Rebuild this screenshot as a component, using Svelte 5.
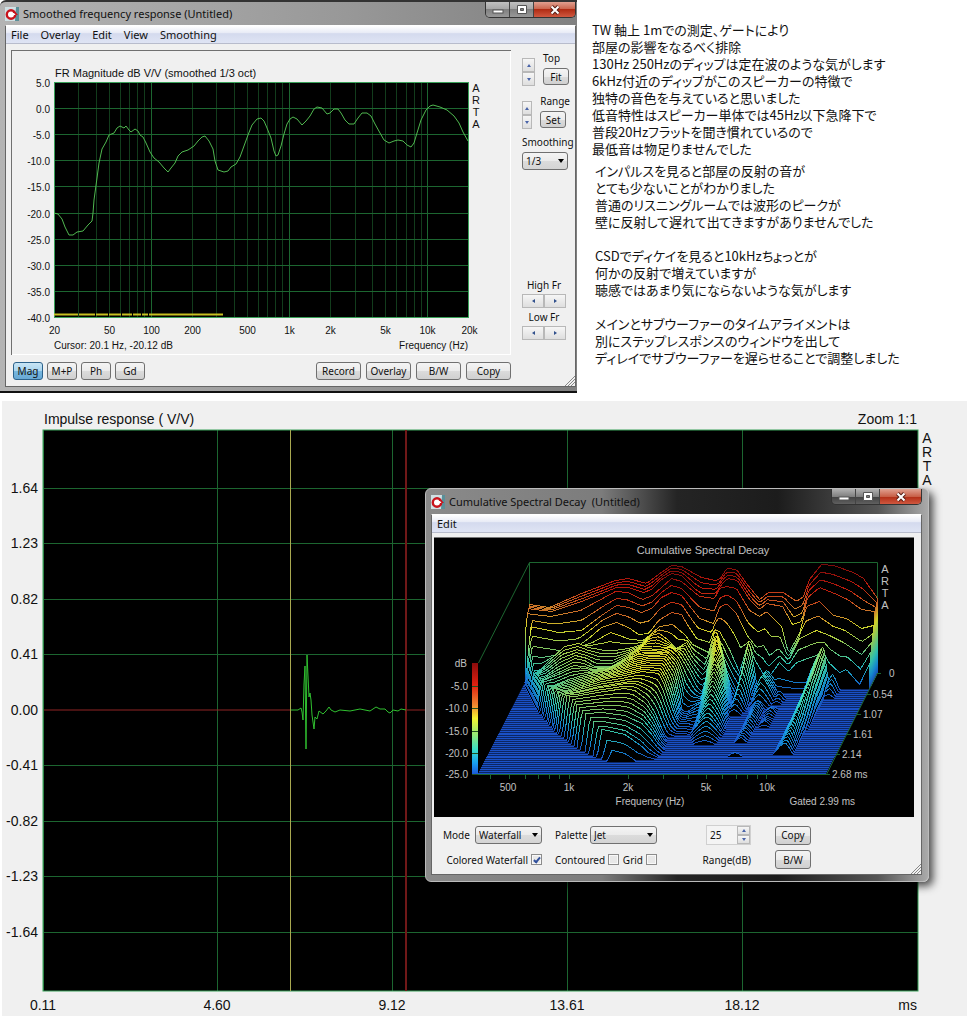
<script>
	const notes = [
		[
			'TW 軸上 1mでの測定、ゲートにより',
			'部屋の影響をなるべく排除',
			'130Hz 250Hzのディップは定在波のような気がします',
			'6kHz付近のディップがこのスピーカーの特徴で',
			'独特の音色を与えていると思いました',
			'低音特性はスピーカー単体では45Hz以下急降下で',
			'普段20Hzフラットを聞き慣れているので',
			'最低音は物足りませんでした'
		],
		[
			'インパルスを見ると部屋の反射の音が',
			'とても少ないことがわかりました',
			'普通のリスニングルームでは波形のピークが',
			'壁に反射して遅れて出てきますがありませんでした'
		],
		[
			'CSDでディケイを見ると10kHzちょっとが',
			'何かの反射で増えていますが',
			'聴感ではあまり気にならないような気がします'
		],
		[
			'メインとサブウーファーのタイムアライメントは',
			'別にステップレスポンスのウィンドウを出して',
			'ディレイでサブウーファーを遅らせることで調整しました'
		]
	];

	// frequency response
	const frX = (f) => Math.round(54 + (414.5 * Math.log10(f / 20)) / 3) + 0.5;
	const frY = (db) => Math.round(82 + ((5 - db) * 235) / 45) + 0.5;
	const frRows = [5, 0, -5, -10, -15, -20, -25, -30, -35, -40];
	const frCols = [];
	for (const dec of [10, 100, 1000, 10000]) {
		for (let n = 1; n < 10; n++) {
			const f = dec * n;
			if (f > 20 && f < 20000) frCols.push({f, major: n === 1});
		}
	}
	const frLabels = [[20, '20'], [50, '50'], [100, '100'], [200, '200'], [500, '500'], [1000, '1k'], [2000, '2k'], [5000, '5k'], [10000, '10k'], [20000, '20k']];
	const frCurve = '54,213 58,214 62,219 65,227 69,235 73,235 77,232 83,231 88,225 92,221 93,213 94,200 97,178 99,163 102,149 106,142 109,135 114,133 117,128 120,126 124,128 126,126 129,130 131,132 135,129 138,131 140,135 143,137 146,143 150,152 154,158 159,162 164,168 168,172 171,168 175,163 178,156 182,152 188,150 194,146 198,141 202,137 205,136 209,141 213,149 215,161 218,170 224,172 228,171 231,167 236,164 240,157 244,146 248,135 252,125 257,119 261,118 264,121 267,128 271,138 274,151 276,156 278,155 281,146 284,134 287,124 290,119 293,117 297,119 302,125 306,121 310,116 314,109 317,107 322,108 327,114 330,113 334,109 338,109 341,113 345,120 349,124 354,124 358,118 362,113 367,113 371,116 375,124 380,133 384,140 389,143 394,141 398,140 403,141 407,145 411,147 414,143 417,133 421,120 426,110 430,106 433,105 440,107 447,110 454,116 459,123 463,132 468,141';

	// impulse response
	const irRows = [[488, '1.64'], [543, '1.23'], [599, '0.82'], [654, '0.41'], [710, '0.00'], [765, '-0.41'], [821, '-0.82'], [876, '-1.23'], [932, '-1.64']];
	const irCols = [[43, '0.11'], [217, '4.60'], [392, '9.12'], [567, '13.61'], [742, '18.12']];
	const irCurve = '291,710 298,710 301,708 302,712 303,720 304,684 305,666 306,749 307,655 309,697 310,693 311,700 312,715 314,729 315,717 317,719 319,711 323,714 326,711 329,707 331,710 335,712 340,710 350,711 360,709 370,711 376,707 380,709 385,709 388,712 390,713 393,710 398,711 401,709 406,710';

	// cumulative spectral decay: [x, height] profiles for some of the slices
	const profiles = [
		[0, [[0, 69], [20, 66], [52, 80], [86, 93], [99, 95], [117, 90], [129, 99], [142, 108], [152, 107], [172, 96], [186, 93], [191, 95], [197, 105], [207, 104], [217, 90], [230, 74], [239, 81], [254, 81], [267, 72], [274, 77], [280, 94], [292, 109], [304, 108], [324, 101], [334, 95], [348, 75]]],
		[3, [[0, 71], [25, 68], [55, 78], [75, 86], [90, 92], [102, 92], [117, 87], [125, 90], [135, 100], [145, 106], [155, 104], [168, 91], [175, 86], [189, 86], [195, 95], [201, 101], [211, 99], [223, 80], [233, 70], [240, 76], [256, 73], [266, 55], [275, 58], [281, 82], [293, 92], [308, 86], [321, 80], [335, 70], [348, 68]]],
		[4, [[0, 68], [25, 65], [55, 71], [90, 90], [102, 89], [117, 82], [127, 86], [146, 103], [156, 100], [174, 85], [189, 83], [194, 93], [201, 95], [211, 93], [224, 71], [234, 65], [241, 70], [256, 55], [263, 28], [274, 48], [281, 75], [294, 80], [308, 66], [321, 63], [336, 53], [348, 56]]],
		[6, [[0, 60], [11, 58], [35, 53], [58, 55], [78, 70], [93, 80], [105, 78], [118, 73], [128, 77], [138, 88], [148, 93], [158, 90], [168, 77], [176, 67], [190, 62], [196, 78], [203, 82], [213, 72], [223, 51], [233, 38], [240, 40], [246, 30], [255, 37], [265, 25], [276, 47], [293, 55], [306, 50], [320, 43], [338, 31], [348, 43]]],
		[8, [[0, 44], [37, 38], [53, 40], [67, 50], [80, 61], [95, 66], [107, 61], [117, 54], [127, 55], [137, 68], [150, 76], [160, 74], [167, 62], [175, 50], [188, 46], [193, 59], [198, 57], [208, 39], [218, 16], [227, 47], [233, 29], [242, 14], [247, 11], [258, 26], [267, 17], [275, 26], [292, 32], [302, 36], [307, 26], [318, 16], [325, 19], [338, 4], [348, 25]]],
		[9, [[0, 36], [21, 33], [40, 36], [60, 44], [72, 48], [90, 58], [110, 51], [123, 50], [139, 64], [152, 66], [164, 56], [172, 46], [188, 38], [194, 58], [202, 45], [212, 24], [220, 12], [240, 6], [258, 12], [275, 8], [300, 8], [318, 0], [348, 0]]],
		[11, [[0, 24], [21, 24], [33, 36], [46, 48], [60, 51], [70, 47], [86, 44], [96, 44], [110, 46], [123, 50], [133, 59], [141, 61], [150, 54], [158, 46], [168, 52], [175, 40], [186, 30], [195, 50], [210, 20], [220, 0], [348, 0]]],
		[16, [[0, 24], [31, 28], [45, 38], [61, 46], [71, 44], [81, 38], [98, 38], [115, 48], [128, 56], [148, 55], [157, 57], [165, 51], [175, 34], [183, 18], [191, 10], [210, 8], [218, 0], [348, 0]]],
		[22, [[0, 28], [46, 30], [61, 36], [74, 40], [87, 43], [104, 46], [117, 50], [127, 54], [141, 57], [157, 57], [167, 42], [172, 19], [174, 6], [179, 3], [191, 12], [210, 8], [220, 0], [348, 0]]],
		[28, [[0, 32], [65, 37], [80, 42], [100, 48], [123, 52], [140, 56], [157, 54], [162, 44], [168, 26], [173, 12], [177, 4], [186, 4], [200, 0], [348, 0]]],
		[34, [[0, 40], [79, 42], [102, 46], [129, 50], [139, 48], [151, 39], [159, 26], [166, 10], [171, 0], [348, 0]]],
		[40, [[0, 37], [97, 37], [112, 38], [135, 35], [152, 27], [162, 16], [168, 7], [175, 0], [348, 0]]],
		[44, [[0, 28], [117, 28], [139, 23], [156, 11], [162, 5], [172, 0], [348, 0]]],
		[46, [[0, 11], [129, 11], [141, 8], [153, 0], [348, 0]]],
		[47, [[0, 0], [348, 0]]]
	];
	// resonance ridges: [slice, x, height, left width, right width]
	const ridges = [
		[[8, 195, 58, 16, 14], [14, 201, 58, 16, 16], [20, 205, 48, 17, 16], [26, 208, 34, 17, 16], [32, 209, 18, 17, 16], [37, 212, 4, 14, 12], [38, 212, 0, 14, 12]],
		[[9, 228, 48, 8, 9], [14, 228, 34, 8, 9], [22, 226, 6, 8, 8], [23, 226, 0, 8, 8]],
		[[9, 246, 20, 10, 14], [14, 246, 24, 10, 14], [18, 246, 8, 9, 10], [19, 247, 9, 8, 7], [26, 248, 9, 8, 7], [36, 247, 5, 7, 6], [37, 247, 0, 7, 6]],
		[[13, 263, 8, 6, 6], [16, 263, 3, 6, 6], [17, 262, 0, 6, 6], [21, 262, 6, 7, 6], [24, 262, 3, 6, 6], [27, 262, 5, 6, 6], [29, 262, 0, 6, 6]],
		[[9, 303, 44, 20, 5], [12, 303, 42, 18, 5], [20, 302, 34, 16, 6], [30, 300, 25, 14, 6], [42, 297, 12, 12, 8], [43, 297, 0, 12, 8]],
		[[9, 312, 16, 8, 7], [12, 312, 8, 8, 6], [14, 312, 0, 8, 6]],
		[[42, 248, 0, 8, 8], [43, 248, 4, 8, 8], [44, 248, 0, 8, 8]]
	];
	const starts = [[0, 0], [6, 2], [12, 12], [19, 26], [31, 58], [39, 86], [44, 111], [46, 123], [60, 123]];

	function lerpKeys(keys, at) {
		let k = 0;
		while (k < keys.length - 2 && keys[k + 1][0] < at) k++;
		const a = keys[k];
		const b = keys[k + 1];
		const t = Math.min(1, Math.max(0, (at - a[0]) / (b[0] - a[0])));
		return a.map((v, n) => v + (b[n] - v) * t);
	}

	function baseHeight(i, x) {
		let k = 0;
		while (k < profiles.length - 2 && profiles[k + 1][0] < i) k++;
		const t = Math.min(1, (i - profiles[k][0]) / (profiles[k + 1][0] - profiles[k][0]));
		const h0 = lerpKeys(profiles[k][1], x)[1];
		const h1 = lerpKeys(profiles[k + 1][1], x)[1];
		return h0 + (h1 - h0) * t;
	}

	function sliceHeight(i, x) {
		const start = lerpKeys(starts, i)[1];
		let h = baseHeight(i, x) * Math.min(1, Math.max(0, (x - start) / 5 + (i < 5 ? 1 : 0)));
		for (const ridge of ridges) {
			if (i < ridge[0][0]) continue;
			const [, peak, top, left, right] = lerpKeys(ridge, i);
			const d = x < peak ? (peak - x) / left : (x - peak) / right;
			h = Math.max(h, top * (1 - d ** 1.3));
		}
		return h < 1 ? 0 : h;
	}

	const slices = [];
	for (let i = 0; i <= 52; i++) {
		let d = 'M0 0';
		for (let x = 0; x <= 348; x += 2) {
			d += `L${x} ${(-sliceHeight(i, x)).toFixed(1)}`;
		}
		slices.push({d: d + 'L348 0', x: 529.5 - i * 0.99, y: Math.round(672 + i * 1.92) + 0.5});
	}

	const csdTicks = [490, 509, 525, 538, 549, 559, 569, 628, 663, 688, 706, 722, 736, 747, 757, 766];
	const csdFreqs = [[508, '500'], [569, '1k'], [628, '2k'], [706, '5k'], [767, '10k']];
	const csdLevels = [[685, '-5.0'], [707, '-10.0'], [730, '-15.0'], [752, '-20.0'], [773, '-25.0']];
	const csdTimes = [[877, 672, '0', 889], [867, 693, '0.54', 873], [857, 713, '1.07', 863], [847, 733, '1.61', 853], [836, 753, '2.14', 842], [826, 773, '2.68 ms', 832]];

	let view = $state('Mag');
	let smoothing = $state('1/3');
	let mode = $state('Waterfall');
	let palette = $state('Jet');
	let range = $state(25);
	let colored = $state(true);
	let contoured = $state(false);
	let grid = $state(false);
</script>

{#snippet logo()}
	<svg class="logo" viewBox="0 0 14 14" aria-hidden="true">
		<rect width="14" height="14" fill="#cfe0e4"/>
		<path d="M11 0h3v14h-4z" fill="#5b8f98"/>
		<circle cx="6" cy="7.500" r="4.200" fill="#fff" stroke="#c8141c" stroke-width="2.400"/>
		<path d="M6.500 8l2.500-4.500 4 4.500z" fill="#c8141c"/>
		<path d="M6 6h3l1.500 2H6z" fill="#fff"/>
	</svg>
{/snippet}

{#snippet caption(name)}
	<header class="titlebar">
		{@render logo()}
		<h2>{name}</h2>
		<div class="winBtns">
			<button aria-label="Minimize"><svg viewBox="0 0 14 10"><rect x="2" y="5" width="10" height="3" fill="#fff" stroke="#555"/></svg></button>
			<button aria-label="Maximize"><svg viewBox="0 0 14 10"><path d="M2.500.500h9v8h-9zM5.500 3.500h3v2h-3z" fill="#fff" fill-rule="evenodd" stroke="#555"/></svg></button>
			<button class="close" aria-label="Close"><svg viewBox="0 0 14 10"><path d="M3.500 1.500l7 7m0-7l-7 7" stroke="#5a2018" stroke-width="4"/><path d="M3.500 1.500l7 7m0-7l-7 7" stroke="#fff" stroke-width="2"/></svg></button>
		</div>
	</header>
{/snippet}

{#snippet grip()}
	<svg class="grip" viewBox="0 0 10 10" aria-hidden="true"><path d="M0 10L10 0M3 10l7-7M6 10l4-4" stroke="#888"/></svg>
{/snippet}

<main>
	<div class="top">
		<section class="window fr">
			{@render caption('Smoothed frequency response (Untitled)')}
			<div class="client">
				<nav class="menu">
					{#each ['File', 'Overlay', 'Edit', 'View', 'Smoothing'] as item}
						<button>{item}</button>
					{/each}
				</nav>
				<div class="frBody">
					<svg class="frChart" viewBox="11 50 500 305" role="img" aria-label="FR Magnitude">
						<rect x="54" y="82" width="415" height="236" fill="#000"/>
						{#each frCols as col}
							<path class={col.major ? 'major' : 'minor'} d="M{frX(col.f)} 82V318"/>
						{/each}
						{#each frRows as db}
							<path class="major" d="M54 {frY(db)}H469"/>
							<text x="50" y={frY(db) + 4} text-anchor="end">{db.toFixed(1)}</text>
						{/each}
						<rect x="54.500" y="82.500" width="414" height="235" fill="none" stroke="#38a058"/>
						<path d="M54 314.500H223" stroke="#c8c020" stroke-width="2" stroke-dasharray="24 1 16 1 12 1 12 1 10 1 8 1 6 1 90"/>
						<polyline class="trace" points={frCurve}/>
						{#each frLabels as [f, label]}
							<text x={frX(f)} y="334" text-anchor="middle">{label}</text>
						{/each}
						<text class="heading" x="55" y="77">FR Magnitude dB V/V (smoothed 1/3 oct)</text>
						<text x="54" y="349">Cursor: 20.1 Hz, -20.12 dB</text>
						<text x="468" y="349" text-anchor="end">Frequency (Hz)</text>
						{#each 'ARTA' as letter, n}
							<text class="heading" x="476" y={92 + n * 12} text-anchor="middle">{letter}</text>
						{/each}
					</svg>
					<aside class="side">
						{#each [['Top', 'Fit'], ['Range', 'Set']] as [label, action]}
							<div class="spinGroup">
								<div class="spin">
									<button aria-label="{label} up"><i class="up"></i></button>
									<button aria-label="{label} down"><i class="down"></i></button>
								</div>
								<div class="spinText">
									<span>{label}</span>
									<button class="btn">{action}</button>
								</div>
							</div>
						{/each}
						<label for="smoothing">Smoothing</label>
						<div class="select">
							<select id="smoothing" bind:value={smoothing}>
								<option>1/3</option>
								<option>1/6</option>
								<option>1/12</option>
							</select>
						</div>
						<div class="scrolls">
							{#each ['High Fr', 'Low Fr'] as label}
								<span>{label}</span>
								<div class="scroll">
									<button aria-label="{label} left"><i class="left"></i></button>
									<button aria-label="{label} right"><i class="right"></i></button>
								</div>
							{/each}
						</div>
					</aside>
				</div>
				<div class="frBtns">
					{#each ['Mag', 'M+P', 'Ph', 'Gd'] as item}
						<button class="btn" class:active={view === item} onclick={() => (view = item)}>{item}</button>
					{/each}
					<span class="fill"></span>
					{#each ['Record', 'Overlay', 'B/W', 'Copy'] as item}
						<button class="btn wide">{item}</button>
					{/each}
				</div>
				{@render grip()}
			</div>
		</section>

		<article class="notes">
			{#each notes as para}
				<p>{#each para as line}{line}<br>{/each}</p>
			{/each}
		</article>
	</div>

	<section class="impulse">
		<svg viewBox="2 401 965 615" role="img" aria-label="Impulse response">
			<rect x="43" y="430" width="875" height="561" fill="#000"/>
			{#each irCols as [x, label]}
				<path class="major" d="M{x + 0.5} 430V991"/>
				<text x={x} y="1010" text-anchor="middle">{label}</text>
			{/each}
			{#each irRows as [y, label]}
				{#if label !== '0.00'}
					<path class="major" d="M43 {y + 0.5}H918"/>
				{/if}
				<text x="38" y={y + 5} text-anchor="end">{label}</text>
			{/each}
			<rect x="43" y="430" width="875" height="561" fill="none" stroke="#38a058"/>
			<path d="M44 710H291M406 710H918" stroke="#902424"/>
			<path d="M290.500 430V991" stroke="#a8a850"/>
			<path d="M406 430V991" stroke="#701818" stroke-width="2"/>
			<polyline class="pulse" points={irCurve}/>
			<text x="44" y="424">Impulse response ( V/V)</text>
			<text x="917" y="424" text-anchor="end">Zoom 1:1</text>
			<text x="917" y="1010" text-anchor="end">ms</text>
			{#each 'ARTA' as letter, n}
				<text x="927" y={443 + n * 14} text-anchor="middle">{letter}</text>
			{/each}
		</svg>

		<section class="window csd">
			{@render caption('Cumulative Spectral Decay  (Untitled)')}
			<div class="client">
				<nav class="menu">
					<button>Edit</button>
				</nav>
				<svg class="csdChart" viewBox="434 537 480 279" role="img" aria-label="Cumulative Spectral Decay">
					<defs>
						<linearGradient id="jet" gradientUnits="userSpaceOnUse" x1="0" y1="-111" x2="0" y2="0">
							<stop offset="0" stop-color="#8a0c0c"/>
							<stop offset="0.200" stop-color="#e02010"/>
							<stop offset="0.380" stop-color="#f08830"/>
							<stop offset="0.500" stop-color="#f4f430"/>
							<stop offset="0.650" stop-color="#90e878"/>
							<stop offset="0.780" stop-color="#38e0c8"/>
							<stop offset="0.900" stop-color="#18a0f0"/>
							<stop offset="1" stop-color="#1c58d8"/>
						</linearGradient>
					</defs>
					<rect x="434" y="537" width="480" height="279" fill="#000"/>
					<path class="wall" d="M478.500 662L529.500 561.500H877.500V672M529.500 561.500V604"/>
					<path d="M524 683H872L826 773H478z" fill="#0c2664"/>
					{#each slices as s}
						<g transform="translate({s.x} {s.y})">
							<path class="slice" d={s.d}/>
						</g>
					{/each}
					<path class="wall" d="M877.500 672L826.500 773.500H472"/>
					<g transform="translate(472 773)">
						<rect y="-111" width="6" height="111" fill="url(#jet)"/>
					</g>
					{#each csdTicks as x}
						<path class="wall" d="M{x + 0.5} 773V778"/>
					{/each}
					{#each csdFreqs as [x, label]}
						<text x={x} y="790" text-anchor="middle">{label}</text>
					{/each}
					<text x="467" y="666" text-anchor="end">dB</text>
					{#each csdLevels as [y, label]}
						<path d="M472 {y + 0.5}H478" stroke="#205020"/>
						<text x="468" y={y + 4} text-anchor="end">{label}</text>
					{/each}
					{#each csdTimes as [x, y, label, tx]}
						<path class="wall" d="M{x} {y + 0.5}h4"/>
						<text x={tx} y={y + 4}>{label}</text>
					{/each}
					<text class="heading" x="703" y="553" text-anchor="middle">Cumulative Spectral Decay</text>
					<text x="650" y="804" text-anchor="middle">Frequency (Hz)</text>
					<text x="855" y="804" text-anchor="end">Gated 2.99 ms</text>
					{#each 'ARTA' as letter, n}
						<text class="heading" x="885" y={572 + n * 12} text-anchor="middle">{letter}</text>
					{/each}
				</svg>
				<div class="controls">
					<div class="pair">
						<label for="mode">Mode</label>
						<div class="select long">
							<select id="mode" bind:value={mode}>
								<option>Waterfall</option>
								<option>Sonogram</option>
							</select>
						</div>
					</div>
					<div class="pair">
						<label for="palette">Palette</label>
						<div class="select long">
							<select id="palette" bind:value={palette}>
								<option>Jet</option>
								<option>Gray</option>
							</select>
						</div>
					</div>
					<div class="number">
						<input id="range" type="text" inputmode="numeric" bind:value={range}>
						<div class="spin small">
							<button aria-label="Range up" onclick={() => range++}><i class="up"></i></button>
							<button aria-label="Range down" onclick={() => range--}><i class="down"></i></button>
						</div>
					</div>
					<button class="btn tall">Copy</button>
					<label class="tick">Colored Waterfall <input type="checkbox" bind:checked={colored}></label>
					<div class="pair">
						<label class="tick">Contoured <input type="checkbox" bind:checked={contoured}></label>
						<label class="tick">Grid <input type="checkbox" bind:checked={grid}></label>
					</div>
					<label class="rangeLabel" for="range">Range(dB)</label>
					<button class="btn tall">B/W</button>
				</div>
				{@render grip()}
			</div>
		</section>
	</section>
</main>

<style>
	:global(body) {
		margin: 0;
		background: #fff;
	}

	main {
		font-family: "Noto Sans", "Liberation Sans", sans-serif;
		font-size: 10px;
		line-height: 14px;
		color: #111;
		padding-bottom: 8px;
	}

	button, select, input {
		font: inherit;
		color: inherit;
		box-sizing: border-box;
		margin: 0;
		padding: 0;
	}

	svg {
		display: block;
	}

	.top {
		display: grid;
		grid-template-columns: minmax(0, 577px) 1fr;
		align-items: start;
		column-gap: 15px;
		margin-bottom: 8px;
	}

	/* windows */
	.window {
		box-sizing: border-box;
	}

	.fr {
		padding: 0 1px 4px 5px;
		background: linear-gradient(90deg, #b4b4b4, #989898 60%, #808080);
		border-top: 2px solid #333;
		border-bottom: 2px solid #111;
		border-top-left-radius: 6px;
	}

	.csd {
		position: absolute;
		top: 87px;
		right: 38px;
		width: 504px;
		padding: 0 6px 6px 5px;
		border: 1px solid #bbb;
		border-radius: 6px;
		background: linear-gradient(90deg, #8a8a8a, #7c7c7c 35%, #242424 50%, #1c1c1c 70%, #555 90%, #aaa);
		box-shadow: 4px 4px 9px rgba(0, 0, 0, .7);
	}

	.titlebar {
		display: flex;
		align-items: center;
		height: 23px;
	}

	.csd .titlebar {
		height: 25px;
	}

	.logo {
		width: 14px;
		height: 14px;
		margin-right: 4px;
	}

	h2 {
		margin: 0;
		flex: 1;
		font-size: 11px;
		font-weight: 400;
		white-space: pre;
	}

	.winBtns {
		display: flex;
		align-self: flex-start;
		border: 1px solid #333;
		border-top: 0;
		border-radius: 0 0 5px 5px;
		overflow: hidden;
	}

	.winBtns button {
		display: flex;
		align-items: center;
		justify-content: center;
		width: 24px;
		height: 15px;
		border: 0;
		border-right: 1px solid #444;
		background: linear-gradient(#c0c0c0, #a4a4a4 50%, #808080 50%, #989898);
	}

	.csd .winBtns button {
		background: linear-gradient(#b0b0b0, #808080 50%, #404040 50%, #606060);
	}

	.winBtns .close,
	.csd .winBtns .close {
		width: 41px;
		border-right: 0;
		background: linear-gradient(#e0a090, #c86048 50%, #b02c14 50%, #d05840);
	}

	.winBtns svg {
		width: 14px;
		height: 10px;
	}

	.client {
		position: relative;
		background: #f0f0f0;
		border: 1px solid #666;
		border-top-color: #fff;
	}

	.grip {
		position: absolute;
		right: 0;
		bottom: 0;
		width: 10px;
		height: 10px;
	}

	.menu {
		display: flex;
		gap: 12px;
		height: 17px;
		padding: 0 5px;
		background: linear-gradient(#fff, #e8ebf6 40%, #d4daee 45%, #dfe4f4);
		border-bottom: 1px solid #b8bccc;
	}

	.menu button {
		border: 0;
		background: none;
		font-size: 11px;
		line-height: 16px;
	}

	/* controls */
	.btn {
		height: 18px;
		width: 30px;
		border: 1px solid #707070;
		border-radius: 3px;
		background: linear-gradient(#f4f4f4, #ebebeb 50%, #dcdcdc 50%, #d0d0d0);
		line-height: 14px;
		white-space: nowrap;
	}

	.btn.wide {
		width: 45px;
	}

	.btn.tall {
		width: 36px;
		height: 19px;
		justify-self: end;
	}

	.btn.active {
		border-color: #2c628b;
		background: linear-gradient(#c8e4f4, #a8d4ee 50%, #78b8e0 50%, #68a8d4);
	}

	.select {
		position: relative;
		display: flex;
	}

	.select::after {
		content: "";
		position: absolute;
		right: 4px;
		top: 7px;
		border: 3px solid transparent;
		border-top: 4px solid #000;
		border-bottom: 0;
		pointer-events: none;
	}

	select {
		appearance: none;
		width: 100%;
		height: 18px;
		padding: 0 3px;
		border: 1px solid #707070;
		border-radius: 3px;
		background: linear-gradient(#f4f4f4, #ebebeb 50%, #dcdcdc 50%, #d4d4d4);
	}

	.spin {
		display: flex;
		flex-direction: column;
		width: 13px;
	}

	.spin button,
	.scroll button {
		display: flex;
		align-items: center;
		justify-content: center;
		width: 100%;
		height: 14px;
		border: 1px solid #b8b8b8;
		background: linear-gradient(#f6f6f6, #dedede);
	}

	.spin.small button {
		height: 9px;
	}

	i {
		border: 2px solid transparent;
	}

	.up {
		border-bottom: 3px solid #4a64a8;
		border-top: 0;
	}

	.down {
		border-top: 3px solid #4a64a8;
		border-bottom: 0;
	}

	.left {
		border-right: 3px solid #30508c;
		border-left: 0;
	}

	.right {
		border-left: 3px solid #30508c;
		border-right: 0;
	}

	/* frequency response window */
	.frBody {
		display: grid;
		grid-template-columns: minmax(0, 1fr) 48px;
		column-gap: 11px;
		padding: 6px 5px 0;
	}

	.frChart {
		width: 100%;
		box-shadow: inset 1px 1px 0 #707070, inset -1px -1px 0 #fff;
	}

	.side {
		display: flex;
		flex-direction: column;
		padding: 1px 0 15px;
	}

	.spinGroup {
		display: flex;
		gap: 8px;
		align-items: flex-end;
		margin-bottom: 8px;
	}

	.spinGroup .btn {
		width: 26px;
		height: 17px;
	}

	.spinText {
		display: flex;
		flex-direction: column;
		gap: 3px;
		height: 35px;
	}

	.side label {
		margin: -2px 0 3px;
	}

	.side .select {
		width: 46px;
	}

	.scrolls {
		display: flex;
		flex-direction: column;
		align-items: center;
		gap: 2px;
		width: 44px;
		margin-top: auto;
	}

	.scroll {
		display: flex;
		width: 100%;
	}

	.frBtns {
		display: flex;
		gap: 4px;
		padding: 7px 64px 6px 7px;
	}

	.frBtns .wide {
		margin-left: 1px;
	}

	.fill {
		flex: 1;
	}

	text {
		font-family: "Liberation Sans", Arial, sans-serif;
		font-size: 10px;
		fill: #111;
	}

	.heading {
		font-size: 11px;
	}

	.major {
		stroke: #1c6630;
	}

	.minor {
		stroke: #123c1c;
	}

	.trace,
	.pulse {
		fill: none;
		stroke: #50b850;
	}

	.pulse {
		stroke: #30c030;
	}

	/* notes */
	.notes {
		padding-top: 21px;
		font-family: "Noto Sans CJK JP", sans-serif;
		font-size: 13px;
		line-height: 17px;
		font-feature-settings: "palt";
		white-space: nowrap;
	}

	.notes p {
		margin: 0 0 17px 3px;
	}

	.notes p:first-child {
		margin: 0 0 5px;
	}

	.notes p:last-child {
		margin-bottom: 0;
	}

	/* impulse response */
	.impulse {
		position: relative;
		margin-left: 2px;
		background: #f0f0f0;
	}

	.impulse > svg {
		width: 100%;
	}

	.impulse > svg text {
		font-size: 14px;
	}

	.csdChart {
		width: calc(100% - 9px);
		margin: 4px 0 0 2px;
		border-top: 1px solid #777;
	}

	.csdChart text {
		fill: #c0c0c0;
	}

	.wall {
		fill: none;
		stroke: #1c6630;
	}

	.slice {
		fill: #000;
		stroke: url(#jet);
		stroke-opacity: .85;
		shape-rendering: crispEdges;
	}

	.controls {
		display: grid;
		grid-template-columns: 99px 102px 81px 47px;
		column-gap: 13px;
		row-gap: 5px;
		align-items: center;
		padding: 8px 11px 5px;
	}

	.pair {
		display: flex;
		align-items: center;
		justify-content: space-between;
	}

	.long {
		width: 67px;
	}

	.tick {
		display: flex;
		align-items: center;
		justify-content: flex-end;
		gap: 3px;
		white-space: nowrap;
	}

	.tick input {
		appearance: none;
		display: grid;
		place-items: center;
		width: 11px;
		height: 11px;
		border: 1px solid #8c8c8c;
		background: #e8e8e8;
		box-shadow: inset 0 0 0 1px #f8f8f8;
	}

	.tick input:checked::after {
		content: "";
		width: 2px;
		height: 5px;
		border: solid #30509c;
		border-width: 0 2px 2px 0;
		transform: rotate(40deg);
	}

	.number {
		display: flex;
		justify-self: end;
		box-sizing: border-box;
		width: 45px;
		height: 20px;
		border: 1px solid #d0d0d0;
	}

	.number input {
		flex: 1;
		min-width: 0;
		border: 0;
		padding-left: 3px;
		background: #f4f4f4;
	}

	.rangeLabel {
		justify-self: end;
	}
</style>
